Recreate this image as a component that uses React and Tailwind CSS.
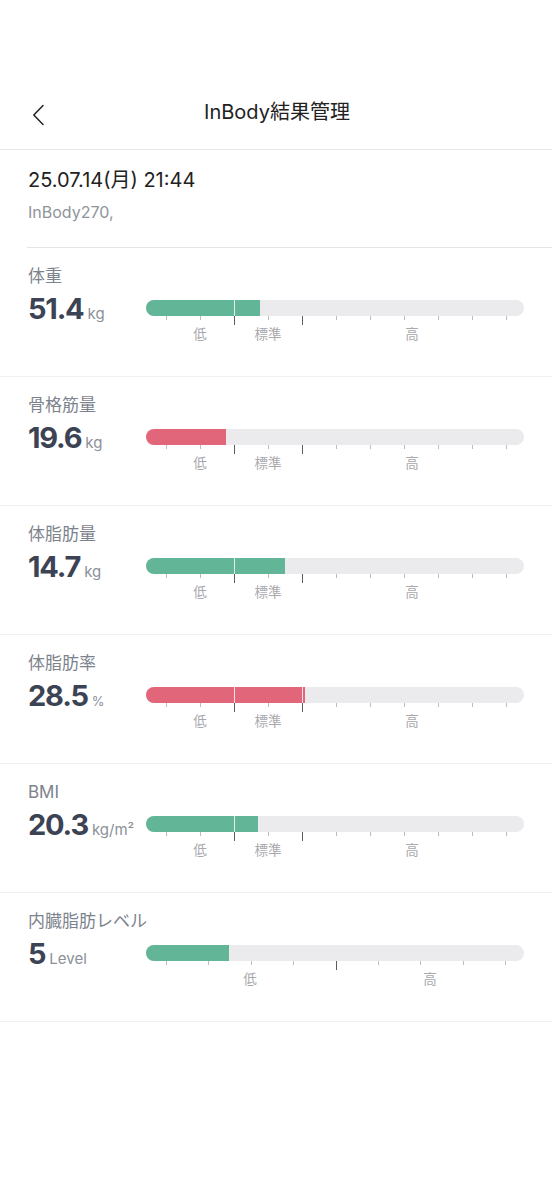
import React from 'react';

const FONT = { fontFamily: 'Inter, "Noto Sans CJK JP", sans-serif' };

const GREEN = 'bg-[#62b596]';
const RED = 'bg-[#e1667a]';

const stdTicks = [20, 54, 88, 122, 156, 190, 224, 258, 292, 326, 360];
const stdBig = [88, 156];
const stdLabels = [
  { text: '低', x: 54 },
  { text: '標準', x: 122 },
  { text: '高', x: 266 },
];

const lvlTicks = [20, 62, 105, 147, 190, 232, 274, 317, 359];
const lvlBig = [190];
const lvlLabels = [
  { text: '低', x: 104 },
  { text: '高', x: 284 },
];

const rows = [
  { name: '体重', value: '51.4', unit: 'kg', fill: 114, color: GREEN, marks: [88] },
  { name: '骨格筋量', value: '19.6', unit: 'kg', fill: 80, color: RED, marks: [] },
  { name: '体脂肪量', value: '14.7', unit: 'kg', fill: 139, color: GREEN, marks: [88] },
  { name: '体脂肪率', value: '28.5', unit: '%', fill: 159, color: RED, marks: [88, 156], small: true },
  { name: 'BMI', value: '20.3', unit: 'kg/m²', fill: 112, color: GREEN, marks: [88] },
  { name: '内臓脂肪レベル', value: '5', unit: 'Level', fill: 83, color: GREEN, marks: [], level: true },
];

function Bar({ row }) {
  const ticks = row.level ? lvlTicks : stdTicks;
  const big = row.level ? lvlBig : stdBig;
  const labels = row.level ? lvlLabels : stdLabels;
  return (
    <div className="relative w-[378px] h-[16px] mt-[8px]">
      <div className="absolute inset-0 rounded-full bg-[#ebebee] overflow-hidden">
        <div className={`h-full ${row.color} relative`} style={{ width: row.fill }}>
          {row.marks.map((m) => (
            <div key={m} className="absolute top-0 bottom-0 w-px bg-white/80" style={{ left: m }} />
          ))}
        </div>
      </div>
      {ticks.map((t) => (
        <div
          key={t}
          className={`absolute top-[16px] w-px ${big.includes(t) ? 'h-[9px] bg-[#5c5c5c]' : 'h-[4px] bg-[#bdbdbd]'}`}
          style={{ left: t }}
        />
      ))}
      {labels.map((l) => (
        <div
          key={l.text}
          className="absolute top-[25px] -translate-x-1/2 text-[13.5px] leading-[18px] text-[#a9a9ad] whitespace-nowrap"
          style={{ left: l.x }}
        >
          {l.text}
        </div>
      ))}
    </div>
  );
}

function Row({ row }) {
  return (
    <div className="h-[129px] border-b border-[#f1f1f3] pt-[17px] pl-[28px]">
      <div className="text-[17px] leading-[22px] text-[#7d838d]">{row.name}</div>
      <div className="flex mt-[5px]">
        <div className="w-[118px] flex items-baseline">
          <span className="text-[29px] leading-[34px] font-bold text-[#3c4354] tracking-[-1.2px]">{row.value}</span>
          <span className={`${row.small ? 'text-[13px]' : 'text-[15px]'} ml-[4px] text-[#8b9099]`}>{row.unit}</span>
        </div>
        <Bar row={row} />
      </div>
    </div>
  );
}

export default function App() {
  return (
    <div className="w-[552px] min-h-[1200px] bg-white" style={FONT}>
      <div className="h-[75px]" />
      <div className="relative h-[75px] flex items-center justify-center border-b border-[#e6e7ea]">
        <svg className="absolute left-[32px] top-[29px]" width="13" height="22" viewBox="0 0 13 22" fill="none">
          <path d="M11 1.5 L1.8 11 L11 20.5" stroke="#222" strokeWidth="1.5" strokeLinecap="round" strokeLinejoin="round" />
        </svg>
        <div className="text-[20px] leading-[26px] text-[#222] ml-[2px]">InBody結果管理</div>
      </div>
      <div className="pt-[18px] pl-[28px]">
        <div className="text-[20px] leading-[24px] text-[#222]">25.07.14(月) 21:44</div>
        <div className="mt-[10px] text-[16px] leading-[20px] text-[#8e949c]">InBody270,</div>
        <div className="mt-[25px] h-px bg-[#e3e4e7] ml-[-1px]" />
      </div>
      {rows.map((r) => (
        <Row key={r.name} row={r} />
      ))}
    </div>
  );
}
